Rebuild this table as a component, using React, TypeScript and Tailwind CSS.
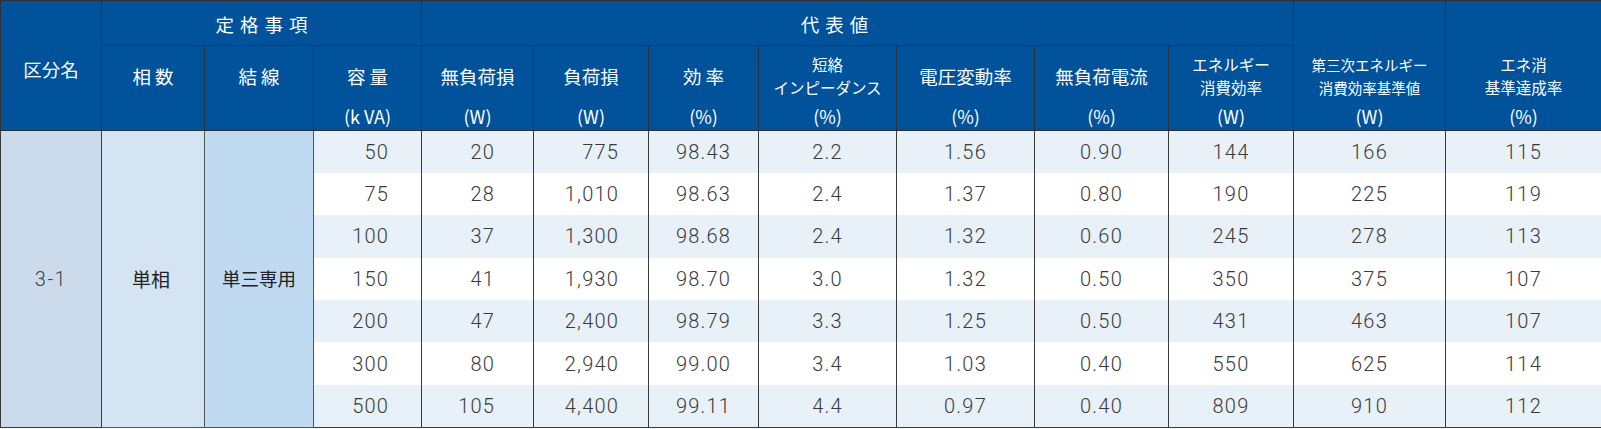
import React from "react"

const font = { fontFamily: "'Noto Sans CJK JP', 'Noto Sans', sans-serif" }
const numFont = { fontFamily: "Roboto, 'Noto Sans CJK JP', sans-serif" }

type Row = string[]

// 容量, 無負荷損, 負荷損, 効率, 短絡, 電圧変動率, 無負荷電流, エネ消費効率, 基準値, 達成率
const rows: Row[] = [
  ["50", "20", "775", "98.43", "2.2", "1.56", "0.90", "144", "166", "115"],
  ["75", "28", "1,010", "98.63", "2.4", "1.37", "0.80", "190", "225", "119"],
  ["100", "37", "1,300", "98.68", "2.4", "1.32", "0.60", "245", "278", "113"],
  ["150", "41", "1,930", "98.70", "3.0", "1.32", "0.50", "350", "375", "107"],
  ["200", "47", "2,400", "98.79", "3.3", "1.25", "0.50", "431", "463", "107"],
  ["300", "80", "2,940", "99.00", "3.4", "1.03", "0.40", "550", "625", "114"],
  ["500", "105", "4,400", "99.11", "4.4", "0.97", "0.40", "809", "910", "112"],
]

const widths = [101, 103, 109, 108, 112, 115, 110, 138, 138, 134, 125, 152, 156]

// alignment per data column (index into row)
const align = [
  "text-right pr-[32px]",
  "text-right pr-[38px]",
  "text-right pr-[29px]",
  "text-center",
  "text-center",
  "text-center",
  "text-center",
  "text-center",
  "text-center",
  "text-center",
]

function HeadCell({
  label,
  unit,
  small,
  track,
}: {
  label: React.ReactNode
  unit: string
  small?: boolean
  track?: boolean
}) {
  return (
    <div className="flex flex-col h-[84px]">
      <div
        className={`h-[60px] flex flex-col justify-center items-center ${
          small ? "text-[15.5px] leading-[23px]" : "text-[18.5px] leading-[24px]"
        } ${track ? "tracking-[4px] pl-[4px]" : ""}`}
      >
        {label}
      </div>
      <div className="h-[20px] leading-[20px] text-[18px] font-normal">{unit}</div>
    </div>
  )
}

const th = "bg-[#00529b] text-white font-normal border-[1.5px] border-[#2b3035] p-0"

export default function App() {
  return (
    <div className="w-[1601px] h-[429px] bg-white overflow-hidden" style={font}>
      <table className="table-fixed border-collapse w-[1601px]">
        <colgroup>
          {widths.map((w, i) => (
            <col key={i} style={{ width: w }} />
          ))}
        </colgroup>
        <thead>
          <tr className="h-[45px]">
            <th rowSpan={2} className={`${th} align-middle text-[18.5px] pt-2`}>
              区分名
            </th>
            <th colSpan={3} className={`${th} align-middle text-[18.5px] tracking-[6px] pl-[6px] pt-[3px]`}>
              定格事項
            </th>
            <th colSpan={7} className={`${th} align-middle text-[18.5px] tracking-[6px] pr-[40px] pt-[3px]`}>
              代表値
            </th>
            <th rowSpan={2} className={`${th} align-bottom`}>
              <HeadCell
                small
                label={
                  <>
                    <span className="text-[14.5px] leading-[23px]">第三次エネルギー</span>
                    <span className="text-[14.5px] leading-[23px]">消費効率基準値</span>
                  </>
                }
                unit="(W)"
              />
            </th>
            <th rowSpan={2} className={`${th} align-bottom`}>
              <HeadCell
                small
                label={
                  <>
                    <span>エネ消</span>
                    <span>基準達成率</span>
                  </>
                }
                unit="(%)"
              />
            </th>
          </tr>
          <tr className="h-[85px]">
            <th className={`${th} align-top`}>
              <HeadCell track label="相数" unit="" />
            </th>
            <th className={`${th} align-top`}>
              <HeadCell track label="結線" unit="" />
            </th>
            <th className={`${th} align-top`}>
              <HeadCell track label="容量" unit="(k VA)" />
            </th>
            <th className={`${th} align-top`}>
              <HeadCell label="無負荷損" unit="(W)" />
            </th>
            <th className={`${th} align-top`}>
              <HeadCell label="負荷損" unit="(W)" />
            </th>
            <th className={`${th} align-top`}>
              <HeadCell label="効率" unit="(%)" track />
            </th>
            <th className={`${th} align-top`}>
              <HeadCell
                small
                label={
                  <>
                    <span>短絡</span>
                    <span>インピーダンス</span>
                  </>
                }
                unit="(%)"
              />
            </th>
            <th className={`${th} align-top`}>
              <HeadCell label="電圧変動率" unit="(%)" />
            </th>
            <th className={`${th} align-top`}>
              <HeadCell label="無負荷電流" unit="(%)" />
            </th>
            <th className={`${th} align-top`}>
              <HeadCell
                small
                label={
                  <>
                    <span>エネルギー</span>
                    <span>消費効率</span>
                  </>
                }
                unit="(W)"
              />
            </th>
          </tr>
        </thead>
        <tbody className="text-[#3a3a3a] text-[20px] font-light">
          {rows.map((r, i) => (
            <tr key={i} className={`h-[42.4px] ${i % 2 === 0 ? "bg-[#e8f0f8]" : "bg-white"}`}>
              {i === 0 && (
                <>
                  <td
                    rowSpan={7}
                    className="bg-[#cbdbeb] text-center text-[#444] tracking-[1.5px] border-x-[1.5px] border-b-[1.5px] border-[#3a3a3a]"
                    style={numFont}
                  >
                    3-1
                  </td>
                  <td rowSpan={7} className="bg-[#d5e4f2] text-center font-normal text-[19px] text-[#222] border-x-[1.5px] border-b-[1.5px] border-[#555] pr-1">
                    単相
                  </td>
                  <td rowSpan={7} className="bg-[#bfdaf1] text-center font-normal text-[#222] text-[18.5px] border-x-[1.5px] border-b-[1.5px] border-[#555]">
                    単三専用
                  </td>
                </>
              )}
              {r.map((v, j) => (
                <td
                  key={j}
                  className={`${align[j]} p-0 tracking-[1.2px] border-x-[1.5px] border-[#3a3a3a] ${
                    i === rows.length - 1 ? "border-b-[1.5px]" : ""
                  }`}
                  style={numFont}
                >
                  {v}
                </td>
              ))}
            </tr>
          ))}
        </tbody>
      </table>
    </div>
  )
}
